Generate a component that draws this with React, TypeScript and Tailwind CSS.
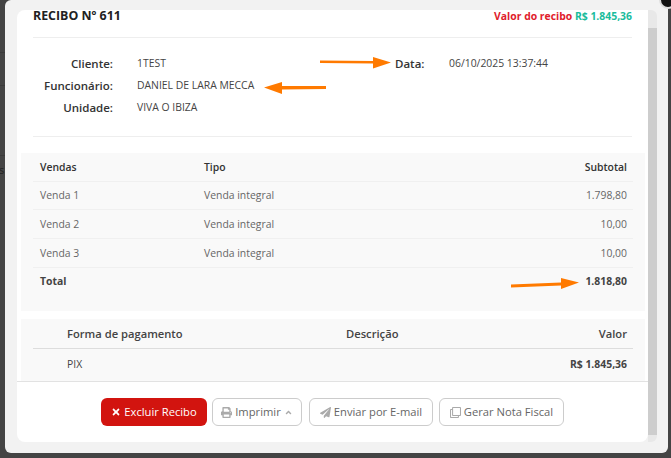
import { FaAngleUp, FaPaperPlane, FaPrint, FaRegClone, FaTimes } from 'react-icons/fa';

const sales = [
  { name: 'Venda 1', type: 'Venda integral', subtotal: '1.798,80', h: 'h-[28px]' },
  { name: 'Venda 2', type: 'Venda integral', subtotal: '10,00', h: 'h-[29px]' },
  { name: 'Venda 3', type: 'Venda integral', subtotal: '10,00', h: 'h-[29px]' },
];

function InfoRow({ label, value }: { label: string; value: string }) {
  return (
    <div className="flex h-[22px] items-center">
      <span className="w-[80px] text-right text-[11.5px] font-semibold text-[#333]">{label}</span>
      <span className="ml-[24px] text-[10.4px] text-[#444]">{value}</span>
    </div>
  );
}

export default function App() {
  return (
    <div className="relative h-[458px] w-[671px] overflow-hidden bg-[#444444] font-['Open_Sans',sans-serif]">
      <div className="ml-[5px] flex h-[453px] w-[663px] rounded-[6px] bg-[#f2f2f2] pb-[11px] pl-[12px] pr-[11px] pt-[10px]">
        <div className="flex min-w-0 flex-1 flex-col overflow-hidden rounded-[8px] rounded-tr-none bg-white">
          {/* title is scrolled up against the top of the card */}
          <div className="mx-[16px] flex h-[28px] items-start justify-between border-b border-[#eeeeee]">
            <span className="text-[12.4px] font-bold leading-[11px] text-[#222]">RECIBO Nº 611</span>
            <span className="text-[10.4px] font-bold leading-[12px]">
              <span className="text-[#e0202c]">Valor do recibo </span>
              <span className="text-[#1abc9c]">R$ 1.845,36</span>
            </span>
          </div>

          <div className="mx-[16px] flex h-[99px] border-b border-[#eeeeee] pt-[15px]">
            <div className="w-[362px]">
              <InfoRow label="Cliente:" value="1TEST" />
              <InfoRow label="Funcionário:" value="DANIEL DE LARA MECCA" />
              <InfoRow label="Unidade:" value="VIVA O IBIZA" />
            </div>
            <div className="flex h-[22px] items-center">
              <span className="w-[54px] text-[11.5px] font-semibold text-[#333]">Data:</span>
              <span className="text-[10.4px] text-[#444]">06/10/2025 13:37:44</span>
            </div>
          </div>

          <div className="ml-[4px] mr-[3px] mt-[16px] h-[158px] bg-[#f9f9f9] px-[12px]">
            <div className="flex h-[29px] items-center border-b border-[#f0f0f0] pl-[7px] pr-[6px] pt-[1px] text-[10.4px] font-semibold text-[#333]">
              <span className="w-[164px]">Vendas</span>
              <span className="flex-1">Tipo</span>
              <span>Subtotal</span>
            </div>
            {sales.map((s) => (
              <div key={s.name} className={`flex items-center border-b border-[#f0f0f0] pl-[7px] pr-[6px] pt-[1px] text-[10.4px] text-[#666] ${s.h}`}>
                <span className="w-[164px]">{s.name}</span>
                <span className="flex-1">{s.type}</span>
                <span>{s.subtotal}</span>
              </div>
            ))}
            <div className="flex h-[28px] items-center justify-between pl-[7px] pr-[6px] text-[10.4px] font-bold text-[#444]">
              <span>Total</span>
              <span>1.818,80</span>
            </div>
          </div>

          <div className="ml-[4px] mr-[3px] mt-[8px] h-[62px] bg-[#f9f9f9] px-[12px]">
            <div className="flex h-[30px] items-center border-b border-[#dddddd] pl-[34px] pr-[6px] pt-[1px] text-[11.2px] font-semibold text-[#444]">
              <span className="w-[279px]">Forma de pagamento</span>
              <span className="flex-1">Descrição</span>
              <span>Valor</span>
            </div>
            <div className="flex h-[30px] items-center justify-between pl-[34px] pr-[6px] pt-[1px] text-[10.4px] text-[#444]">
              <span>PIX</span>
              <span className="font-bold">R$ 1.845,36</span>
            </div>
          </div>

          <div className="flex flex-1 items-start border-t border-[#e2e2e2] pl-[84px] pt-[16px]">
            <button className="flex h-[28px] w-[106px] items-center justify-center gap-[3px] rounded-[6px] bg-[#d2140f] text-[11.2px] text-white">
              <FaTimes size={10} />
              Excluir Recibo
            </button>
            <button className="ml-[5px] flex h-[28px] w-[90px] items-center justify-center gap-[3px] rounded-[6px] border border-[#cccccc] text-[11.2px] text-[#666]">
              <FaPrint size={11} className="text-[#aaaaaa]" />
              Imprimir
              <FaAngleUp size={9} className="text-[#aaaaaa]" />
            </button>
            <button className="ml-[7px] flex h-[28px] w-[124px] items-center justify-center gap-[3px] rounded-[6px] border border-[#cccccc] text-[11.2px] text-[#666]">
              <FaPaperPlane size={11} className="text-[#aaaaaa]" />
              Enviar por E-mail
            </button>
            <button className="ml-[6px] flex h-[28px] w-[125px] items-center justify-center gap-[3px] rounded-[6px] border border-[#cccccc] text-[11.2px] text-[#666]">
              <FaRegClone size={11} className="text-[#aaaaaa]" />
              Gerar Nota Fiscal
            </button>
          </div>
        </div>

        {/* scrollbar */}
        <div className="flex w-[9px] flex-col">
          <div className="h-[18px] rounded-tr-[6px] bg-[#e8e8e8]" />
          <div className="h-[407px] bg-[#cdcdcd]" />
          <div className="flex-1 rounded-br-[6px] bg-[#e8e8e8]" />
        </div>
      </div>

      {/* page behind the backdrop, only a sliver shows on the left */}
      <div className="absolute left-0 top-[52px] h-px w-[5px] bg-[#3a3a3a]" />
      <div className="absolute left-0 top-[85px] h-px w-[5px] bg-[#3a3a3a]" />
      <div className="absolute left-0 top-[155px] h-px w-[5px] bg-[#3a3a3a]" />
      <div className="absolute left-[-1px] top-[163px] w-[6px] overflow-hidden text-[11px] leading-[14px] text-[#222]">s</div>

      {/* close button, peeking over the corner */}
      <div className="absolute left-[659px] top-[-9px] h-[18px] w-[18px] rounded-full border-2 border-[#dddddd] bg-[#111111]" />

      {/* orange annotation arrows */}
      <svg className="absolute left-0 top-0 h-[458px] w-[671px]" viewBox="0 0 671 458" fill="#ff7a00">
        <polygon points="320,60.5 373,61 373,57 391,62.5 373,68.5 373,63.5 320,63" />
        <polygon points="264,87.5 282,82 282,86 326,86 326,89 282,89.5 282,94" />
        <polygon points="511,284.5 561,282.5 561,278 579,282.5 561,289 561,285.5 511,287.5" />
      </svg>
    </div>
  );
}
